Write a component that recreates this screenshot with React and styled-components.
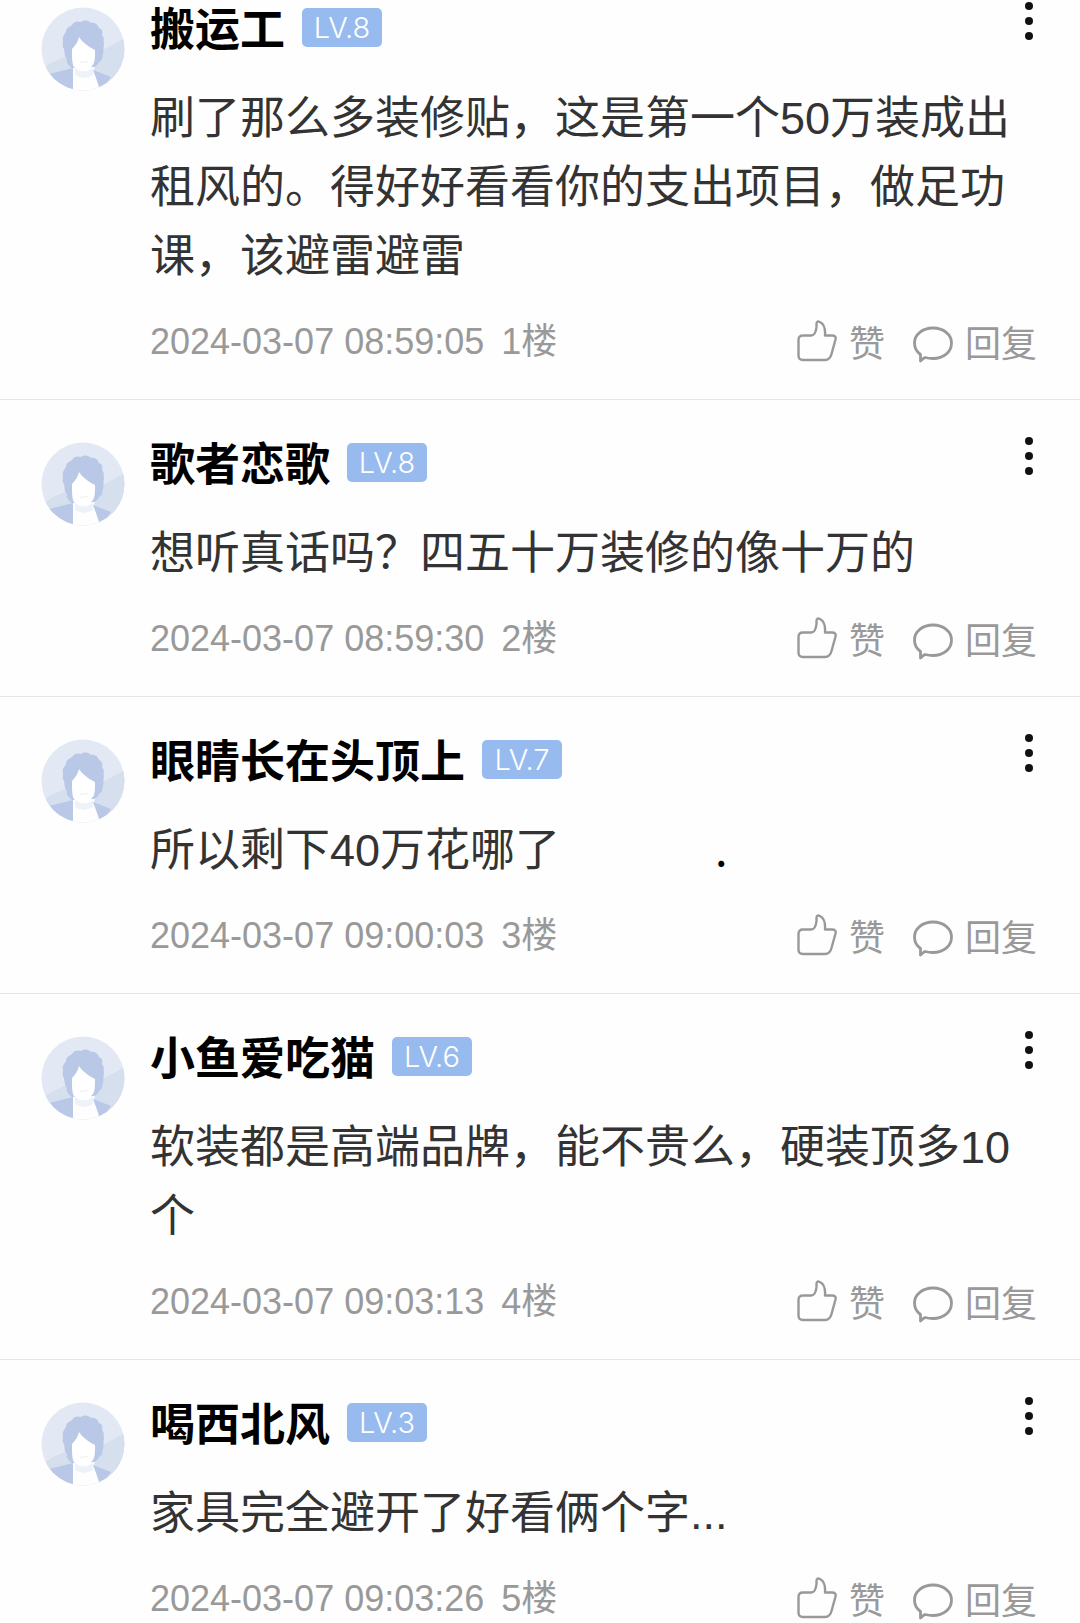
import React from "react";
import styled, { createGlobalStyle } from "styled-components";

const GlobalStyle = createGlobalStyle`
  body {
    margin: 0;
    background-color: #fefefe;
    font-family: "Liberation Sans", "Noto Sans CJK SC", sans-serif;
  }
`;

const List = styled.main`
  height: 100vh;
  overflow: hidden;
`;

const Item = styled.article`
  display: flex;
  gap: 25px;
  padding: 37px 43px 32px 41px;
  border-bottom: 1px solid #e6e6e6;

  &:first-child {
    padding-top: 2px;
  }
`;

const AvatarSvg = styled.svg`
  flex: none;
  width: 84px;
  height: 84px;
  margin-top: 5px;
`;

const Content = styled.div`
  flex: 1;
  min-width: 0;
`;

const Header = styled.header`
  display: flex;
  align-items: flex-start;
  justify-content: space-between;
  height: 50px;
`;

const User = styled.div`
  display: flex;
  align-items: center;
  gap: 17px;
`;

const Name = styled.h2`
  margin: 0;
  color: #000;
  font-family: "Noto Sans CJK SC", sans-serif;
  font-size: 45px;
  font-weight: 700;
  line-height: 50px;
`;

const Level = styled.span`
  width: 80px;
  border-radius: 5px;
  background-color: #98bbef;
  color: #fff;
  font-family: Inter, sans-serif;
  font-size: 29px;
  font-weight: 300;
  line-height: 39px;
  text-align: center;
`;

const IconButton = styled.button`
  display: flex;
  padding: 0;
  border: none;
  background: none;
  color: #111;
  cursor: pointer;
`;

const Text = styled.p`
  margin: 32px 0 26px;
  color: #333;
  font-size: 45px;
  line-height: 69px;
`;

const Trailing = styled.span`
  margin-left: 155px;
  color: #000;
  font-family: "Noto Sans CJK SC", sans-serif;
  line-height: 1;
`;

const Footer = styled.footer`
  display: flex;
  align-items: center;
  justify-content: space-between;
  height: 50px;
  color: #999;
  font-size: 36px;
  line-height: 50px;
`;

const Info = styled.div`
  display: flex;
  gap: 17px;
`;

const Actions = styled.div`
  display: flex;
  gap: 28px;
`;

const Action = styled.button`
  display: flex;
  align-items: center;
  gap: 12px;
  padding: 6px 0 0;
  border: none;
  background: none;
  color: inherit;
  font: inherit;
  cursor: pointer;
`;

const Avatar = () => (
  <AvatarSvg viewBox="0 0 84 84" role="img" aria-label="头像">
    <defs>
      <clipPath id="face">
        <circle cx="42" cy="42" r="41.5" />
      </clipPath>
    </defs>
    <g clipPath="url(#face)">
      <rect width="84" height="84" fill="#e3e9f4" />
      <path d="M0 63 10 56 26 49 40 55 58 45 84 31V84H0Z" fill="#d5dfed" />
      <path d="M8 67 32 61V84H8Z" fill="#bac8e7" />
      <path d="M32 57H54L53 64 59 84H32Z" fill="#fefefe" />
      <path d="M52 63 70 70 60 84Z" fill="#bac8e7" />
      <path d="M34 61Q43 68 52 61V68Q43 74 34 68Z" fill="#edf3f8" />
      <path
        d="M31 61C27 58 25 55 26 52C23 49 24 46 23 42C21 39 22 37 22 34C21 30 23 28 25 25C25 21 28 20 31 18C33 14 37 14 40 15C44 12 48 14 50 16C54 15 57 18 58 21C61 22 62 25 61 28C64 31 62 34 63 37C62 41 63 44 62 47C61 50 62 53 58 55C57 58 55 59 53 60Z"
        fill="#bac8e7"
      />
      <path
        d="M31 42C34 39 37 35 38 30C41 35 48 40 54 43C54 52 54 57 50 60C45 65 37 64 33 60C31 57 31 50 31 42Z"
        fill="#fff"
      />
      <path d="M39 55Q43 56 47 54" fill="none" stroke="#eeeef2" />
    </g>
  </AvatarSvg>
);

const MoreIcon = () => (
  <svg width="16" height="38" viewBox="0 0 16 38" fill="currentColor">
    <circle cx="8" cy="4" r="4" />
    <circle cx="8" cy="19" r="4" />
    <circle cx="8" cy="34" r="4" />
  </svg>
);

const LikeIcon = () => (
  <svg
    width="40"
    height="50"
    viewBox="0 0 40 50"
    fill="none"
    stroke="currentColor"
    strokeWidth="2.4"
    strokeLinejoin="round"
  >
    <path d="M6 15.500H14C17 15.500 19 12 19.500 7V4C19.500 1 21 1.200 23 2C27 4 28.500 9 28 15.500H35Q39.500 15.500 38.500 19.500L34.500 34Q33 40 28 40H6Q1.500 40 1.500 35.500V20Q1.500 15.500 6 15.500Z" />
  </svg>
);

const ReplyIcon = () => (
  <svg
    width="40"
    height="38"
    viewBox="0 0 40 38"
    fill="none"
    stroke="currentColor"
    strokeWidth="2.8"
    strokeLinejoin="round"
  >
    <path d="M7.500 28.500C4 26 1.500 22 1.500 17C1.500 8.500 9.500 2 20 2C30.500 2 38.500 8.500 38.500 17C38.500 26 30.500 32.500 20 32.500C17 32.500 14 32 12 31.500Q10 32.500 7.500 35Z" />
  </svg>
);

const comments = [
  {
    name: "搬运工",
    level: 8,
    text: "刷了那么多装修贴，这是第一个50万装成出租风的。得好好看看你的支出项目，做足功课，该避雷避雷",
    time: "2024-03-07 08:59:05",
  },
  {
    name: "歌者恋歌",
    level: 8,
    text: "想听真话吗？四五十万装修的像十万的",
    time: "2024-03-07 08:59:30",
  },
  {
    name: "眼睛长在头顶上",
    level: 7,
    text: "所以剩下40万花哪了",
    trailing: ".",
    time: "2024-03-07 09:00:03",
  },
  {
    name: "小鱼爱吃猫",
    level: 6,
    text: "软装都是高端品牌，能不贵么，硬装顶多10个",
    time: "2024-03-07 09:03:13",
  },
  {
    name: "喝西北风",
    level: 3,
    text: "家具完全避开了好看俩个字...",
    time: "2024-03-07 09:03:26",
  },
];

const Comment = ({ comment, floor }) => (
  <Item>
    <Avatar />
    <Content>
      <Header>
        <User>
          <Name>{comment.name}</Name>
          <Level>LV.{comment.level}</Level>
        </User>
        <IconButton aria-label="更多">
          <MoreIcon />
        </IconButton>
      </Header>
      <Text>
        {comment.text}
        {comment.trailing && <Trailing>{comment.trailing}</Trailing>}
      </Text>
      <Footer>
        <Info>
          <time>{comment.time}</time>
          <span>{floor}楼</span>
        </Info>
        <Actions>
          <Action>
            <LikeIcon />赞
          </Action>
          <Action>
            <ReplyIcon />
            回复
          </Action>
        </Actions>
      </Footer>
    </Content>
  </Item>
);

const App = () => {
  return (
    <>
      <GlobalStyle />
      <List>
        {comments.map((comment, i) => (
          <Comment key={comment.name} comment={comment} floor={i + 1} />
        ))}
      </List>
    </>
  );
};

export default App;
